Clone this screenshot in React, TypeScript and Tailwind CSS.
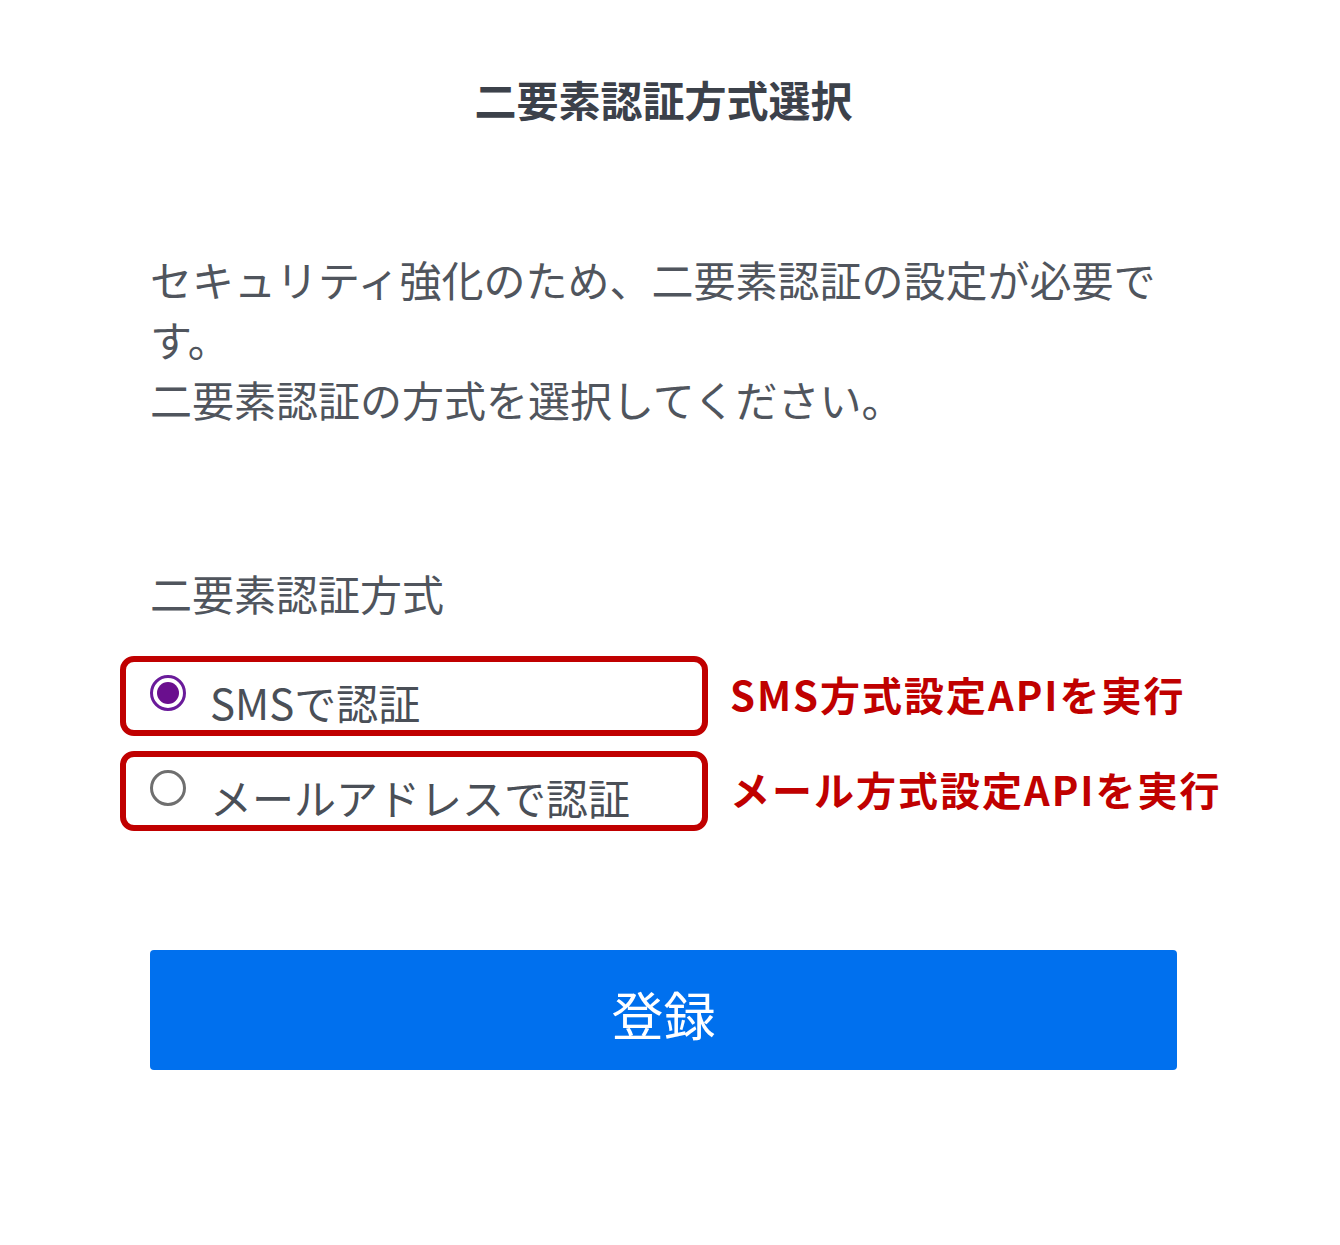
import React from "react";

function Radio({ checked }: { checked: boolean }) {
  if (checked) {
    return (
      <span className="flex h-[36px] w-[36px] shrink-0 items-center justify-center rounded-full border-[3px] border-[#6a1b9a] bg-white">
        <span className="h-[22px] w-[22px] rounded-full bg-[#6a0f8e]" />
      </span>
    );
  }
  return <span className="block h-[36px] w-[36px] shrink-0 rounded-full border-[3px] border-[#6f6f6f] bg-white" />;
}

function Option({ checked, label, note }: { checked: boolean; label: string; note: string }) {
  return (
    <div className="-ml-[30px] flex items-center">
      <div className="flex h-[80px] w-[588px] shrink-0 items-center rounded-[14px] border-[6px] border-[#c00000] pl-[24px]">
        <span className="-mt-[6px]">
          <Radio checked={checked} />
        </span>
        <span className="ml-[24px] mt-[12px] text-[42px] leading-[50px] text-[#4a4f57]">{label}</span>
      </div>
      <span className="ml-[22px] -mt-[4px] whitespace-nowrap text-[40px] font-bold leading-[50px] tracking-[2px] text-[#c00000]">
        {note}
      </span>
    </div>
  );
}

export default function App() {
  return (
    <div className="min-h-[1245px] bg-white font-['Noto_Sans_CJK_JP',sans-serif]">
      <div className="ml-[150px] w-[1027px] pt-[69px]">
        <h1 className="text-center text-[42px] font-bold leading-[60px] text-[#3c414a]">二要素認証方式選択</h1>
        <p className="mt-[120px] text-[42px] leading-[60px] text-[#50555d]">
          セキュリティ強化のため、二要素認証の設定が必要です。
          <br />
          二要素認証の方式を選択してください。
        </p>
        <div className="mt-[134px] text-[42px] leading-[60px] text-[#50555d]">二要素認証方式</div>
        <div className="mt-[33px] flex flex-col gap-[15px]">
          <Option checked label="SMSで認証" note="SMS方式設定APIを実行" />
          <Option checked={false} label="メールアドレスで認証" note="メール方式設定APIを実行" />
        </div>
        <button
          type="button"
          className="mt-[119px] flex h-[120px] w-full items-center justify-center rounded-[4px] bg-[#0070ee] pt-[8px] text-[52px] leading-none text-white"
        >
          登録
        </button>
      </div>
    </div>
  );
}
